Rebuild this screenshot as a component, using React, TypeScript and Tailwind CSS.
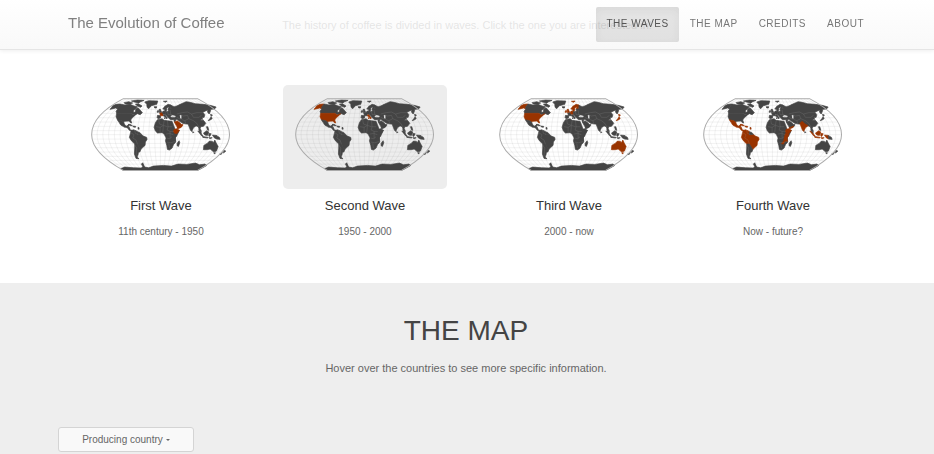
import { useId } from "react";

type RegionId = string;

const LAND: Record<RegionId, string> = {
  alaska: "M90 88 94 83 98 77 108 73 120 72 113 82 113 87 107 84 99 86Z",
  canada:
    "M120 72 135 75 150 73 162 78 172 80 166 87 160 92 160 97 166 96 167 87 174 83 180 90 187 98 180 104 172 101 162 104 152 100 110 100 108 94 113 87 113 81Z",
  arctic:
    "M132 68 146 65 158 69 150 73 136 72Z M154 63 172 60 192 61 180 66 176 70 166 67Z M166 72 176 72 186 78 182 82 172 78Z",
  greenland: "M194 66 206 62 233 63 230 73 214 77 206 86 201 82 200 73Z",
  usa: "M110 100 152 100 160 105 170 101 164 107 156 114 152 120 155 129 151 128 147 123 134 124 131 127 127 123 112 119 108 110Z",
  mexico: "M112 119 127 123 131 127 133 132 138 139 146 134 147 139 142 142 134 142 122 135 117 127Z",
  centralAmerica: "M140 141 148 142 151 150 158 151 156 154 148 151Z",
  caribbean: "M144 133 150 133 157 137 151 137Z M159 138 167 139 166 142 160 141Z M174 142 177 143 177 148 174 147Z",
  tropicalAmerica:
    "M148 172 151 160 153 153 160 149 168 152 172 155 172 163 184 163 190 168 200 172 201 178 196 186 195 196 186 204 182 209 176 200 172 192 164 192 154 182Z",
  guiana: "M172 155 179 157 184 163 172 163Z",
  southernCone: "M164 192 172 192 177 200 182 209 180 215 175 217 174 224 171 231 177 236 168 235 163 222 164 204Z",
  africa:
    "M222 142 226 128 232 119 246 116 252 121 262 122 276 124 280 134 285 148 281 154 287 160 298 151 292 163 286 173 287 186 280 194 276 204 268 210 262 208 260 196 256 182 258 174 252 162 246 158 232 159 226 153Z",
  eastAfrica: "M280 160 289 160 290 166 285 174 286 184 279 183 274 192 268 191 275 182 277 170Z",
  ethiopia: "M282 148 290 146 298 151 291 160 284 160 280 155Z",
  madagascar: "M291 190 297 182 299 188 295 199 291 197Z",
  arabia: "M282 125 292 123 300 129 303 133 309 134 305 140 293 144 288 136Z",
  yemen: "M291 143 305 138 303 142 293 147Z",
  iberia: "M232 106 242 107 241 114 234 116 231 113Z",
  france: "M239 99 245 97 249 100 249 107 241 107Z",
  germany: "M246 98 249 93 256 94 256 103 250 103Z",
  italy: "M250 105 255 104 258 109 262 114 259 117 256 111 251 109Z M253 113 255 113 254 117Z",
  britain: "M237 88 241 88 244 96 238 98Z M232 92 236 92 235 97 231 97Z",
  iceland: "M222 80 230 80 229 84 224 84Z",
  scandinavia: "M248 87 254 79 264 73 273 75 272 86 264 88 267 80 260 84 260 91 255 95 253 88Z",
  svalbard: "M250 64 261 63 257 67Z",
  asia:
    "M256 95 266 93 264 88 273 86 272 76 282 80 290 78 300 73 307 70 318 65 330 67 345 71 370 73 390 76 408 81 403 87 392 88 390 96 387 102 382 96 383 90 376 93 368 97 374 104 372 112 365 113 368 118 364 118 361 121 370 121 377 130 370 139 362 140 360 145 364 154 358 150 354 140 347 137 340 139 327 132 318 132 308 130 298 124 290 118 283 125 281 119 272 119 266 115 258 106 256 103Z",
  india: "M323 130 330 124 339 132 348 137 340 143 335 154 331 151 327 140Z",
  srilanka: "M338 154 341 157 338 159Z",
  japan: "M391 103 397 105 393 109Z M393 110 396 116 390 120 384 122 389 116Z",
  philippines: "M379 140 383 140 386 151 382 150Z",
  malay: "M356 148 361 152 364 160 358 157Z",
  indonesia:
    "M353 153 358 155 369 168 365 168Z M370 159 380 152 386 156 382 166 374 165Z M367 169 384 172 383 174 368 172Z M386 160 393 161 389 169 386 168Z M386 173 396 173 390 176Z M397 165 408 166 410 177 403 174Z",
  papua: "M408 166 418 172 420 178 410 177Z",
  australia: "M371 196 381 190 388 183 397 184 399 189 404 180 408 189 414 199 409 213 401 216 390 207 380 209 370 209Z M401 218 406 218 403 222Z",
  newZealand: "M431 211 437 213 430 219Z M417 223 427 217 423 223Z",
  antarctica:
    "M122 266 134 261 160 263 184 264 188 259 184 252 188 248 191 255 194 261 206 263 220 258 250 256 274 258 294 252 320 253 346 249 358 254 374 252 380 256 364 265 352 271 130 271Z",
};

const BORDERS =
  "M228 140 240 142 250 136 262 140 276 140M236 120 238 132 250 136 252 122M262 122 264 140 261 150 270 154 281 154M240 142 240 158M250 138 248 157M258 162 268 160 280 164M260 174 268 176 276 170M260 186 272 188 286 184M266 190 268 204M270 154 270 176M152 158 162 164 158 174 168 180 172 192M164 151 166 160 174 163M162 192 170 204 168 228M262 94 264 104 276 104 278 112M270 90 272 104M290 102 306 98 322 96 334 102 350 98 370 98M334 102 340 112 356 112 364 106M300 104 310 108 322 106 326 116 340 122 350 130M304 118 314 122 326 116M314 122 318 132M290 112 302 118M350 130 356 140M280 118 292 118";

const SEAS = "M271 109 277 105 287 108 285 112 274 112Z M299 105 304 106 304 116 300 115Z";

const FRAME =
  "M130 56H352C402 82 448 120 448 164C448 207 400 244 352 271H130C82 244 35 207 35 164C35 120 80 82 130 56Z";

const MERIDIANS = Array.from({ length: 23 }, (_, i) => {
  const f = (i - 11) / 12;
  const pole = 241 + f * 111;
  const middle = 241 + f * 161;
  const equator = 241 + f * 207;
  return `M${pole} 56C${middle} 82 ${equator} 120 ${equator} 164C${equator} 207 ${middle} 244 ${pole} 271`;
}).join("");

const PARALLELS = [66, 76, 88, 100, 113, 126, 139, 152, 164, 177, 190, 203, 216, 229, 241, 252, 262]
  .map((y) => `M34 ${y}H449`)
  .join("");

function WorldMap({ highlighted, label }: { highlighted: RegionId[]; label: string }) {
  const clip = useId();
  return (
    <svg viewBox="33 54 417 219" role="img" aria-label={label} className="block w-full">
      <clipPath id={clip}>
        <path d={FRAME} />
      </clipPath>
      <path d={MERIDIANS + PARALLELS} clipPath={`url(#${clip})`} fill="none" stroke="#999" strokeOpacity="0.2" strokeWidth="2" />
      {Object.entries(LAND).map(([id, d]) => (
        <path
          key={id}
          d={d}
          className={highlighted.includes(id) ? "fill-[#993300] stroke-[#993300]" : "fill-[#444] stroke-[#444]"}
          strokeWidth="2"
        />
      ))}
      <path d={SEAS} fill="#ddd" />
      <path d={BORDERS} fill="none" stroke="#999" strokeOpacity="0.6" strokeWidth="1" />
      <path d={FRAME} fill="none" stroke="#aaa" strokeWidth="3" />
    </svg>
  );
}

const WAVES = [
  {
    title: "First Wave",
    period: "11th century - 1950",
    active: false,
    regions: ["france", "arabia", "yemen", "ethiopia"],
  },
  { title: "Second Wave", period: "1950 - 2000", active: true, regions: ["usa", "alaska", "italy"] },
  {
    title: "Third Wave",
    period: "2000 - now",
    active: false,
    regions: ["usa", "alaska", "britain", "scandinavia", "svalbard", "germany", "japan", "australia"],
  },
  {
    title: "Fourth Wave",
    period: "Now - future?",
    active: false,
    regions: [
      "mexico",
      "centralAmerica",
      "caribbean",
      "tropicalAmerica",
      "eastAfrica",
      "ethiopia",
      "yemen",
      "india",
      "indonesia",
    ],
  },
];

const LINKS = [
  { text: "THE WAVES", href: "#waves", active: true },
  { text: "THE MAP", href: "#map", active: false },
  { text: "CREDITS", href: "#credits", active: false },
  { text: "ABOUT", href: "#about", active: false },
];

export default function App() {
  return (
    <div className="min-h-screen bg-[#eee] font-['Liberation_Sans',Arial,sans-serif] text-[#666]">
      <header className="fixed inset-x-0 top-0 z-10 border-b border-[#e5e5e5] bg-linear-to-b from-white/85 to-[#f8f8f8]/85 shadow-[0_1px_4px_rgba(0,0,0,0.07)]">
        <div className="flex items-start justify-between pr-[60px] pl-[58px]">
          <a href="#top" className="px-[10px] pt-[13px] text-[15px] leading-5 text-[#808080]">
            The Evolution of Coffee
          </a>
          <nav className="flex gap-px pt-[7px] pb-[7px]">
            {LINKS.map((link) => (
              <a
                key={link.href}
                href={link.href}
                className={
                  link.active
                    ? "rounded-xs bg-black/10 px-[10px] pt-[7px] pb-[9px] text-[10px] leading-[19px] tracking-wider text-[#555] shadow-[inset_0_3px_8px_rgba(0,0,0,0.06)]"
                    : "px-[10px] pt-[7px] pb-[9px] text-[10px] leading-[19px] tracking-wider text-[#777]"
                }
              >
                {link.text}
              </a>
            ))}
          </nav>
        </div>
      </header>

      <main>
        <section id="waves" className="bg-white px-[59px] pt-4 pb-[42px]">
          <p className="text-center text-[11px] leading-[18px]">
            The history of coffee is divided in waves. Click the one you are interested in!
          </p>
          <div className="mt-[51px] grid grid-cols-4 text-center">
            {WAVES.map((wave) => (
              <article key={wave.title}>
                <button
                  type="button"
                  className={
                    wave.active
                      ? "mx-auto block w-4/5 rounded-[5px] bg-[#ededed] px-3 pt-[13px] pb-[18px]"
                      : "mx-auto block w-4/5 rounded-[5px] px-3 pt-[13px] pb-[18px]"
                  }
                >
                  <WorldMap highlighted={wave.regions} label={`Countries of the ${wave.title}`} />
                </button>
                <h3 className="mt-[7px] text-[13px] leading-5 text-[#333]">{wave.title}</h3>
                <p className="mt-[7px] text-[10px] leading-[18px]">{wave.period}</p>
              </article>
            ))}
          </div>
        </section>

        <section id="map" className="pt-7 pr-[60px] pl-[58px]">
          <h2 className="text-center text-[28px] leading-10 text-[#444]">THE MAP</h2>
          <p className="mt-2 text-center text-[11px] leading-[18px]">
            Hover over the countries to see more specific information.
          </p>
          <button
            type="button"
            className="mt-[50px] flex h-[25px] w-[136px] items-center justify-center gap-[3px] rounded-[3px] border border-[#d4d4d4] bg-[#f9f9f9] text-[10px]"
          >
            Producing country
            <svg viewBox="0 0 4 2" className="h-[2px] w-1" aria-hidden="true">
              <path d="M0 0H4L2 2Z" fill="#666" />
            </svg>
          </button>
        </section>
      </main>
    </div>
  );
}
